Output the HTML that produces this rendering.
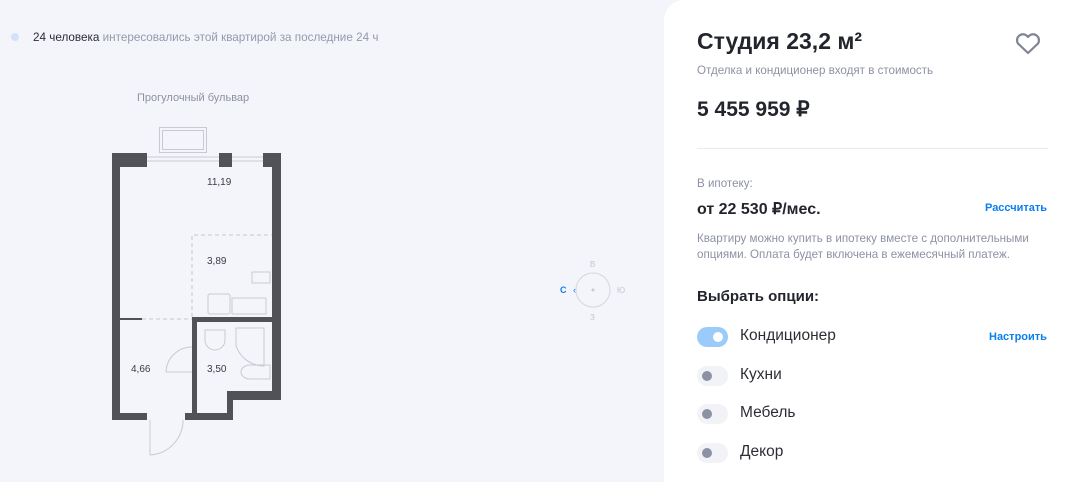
<!DOCTYPE html>
<html><head><meta charset="utf-8"><style>
*{margin:0;padding:0;box-sizing:border-box}
body{width:1080px;height:482px;background:#f3f5fa;font-family:"Liberation Sans",sans-serif;position:relative;overflow:hidden;color:#23252d}
.a{position:absolute;white-space:nowrap}
.card{position:absolute;left:664px;top:0;width:416px;height:482px;background:#fff;border-radius:20px 0 0 0}
.tg{position:absolute;left:697px;width:31px;height:20px;border-radius:10px;background:#f2f3f6}
.tg i{position:absolute;left:5px;top:5px;width:10px;height:10px;border-radius:50%;background:#8c91a4}
.lb{position:absolute;left:740px;font-size:15.5px;color:#2c2e36}
</style></head><body>
<div class="a" style="left:11px;top:33px;width:8px;height:8px;border-radius:50%;background:#d3e2fb"></div>
<div class="a" style="left:33px;top:31px;font-size:11.7px;color:#2b2d35">24 человека <span style="color:#9599ab">интересовались этой квартирой за последние 24 ч</span></div>
<div class="a" style="left:137px;top:92px;font-size:11px;color:#8d91a1">Прогулочный бульвар</div>
<svg class="a" style="left:0;top:0" width="660" height="482">
<g fill="none" stroke="#c8cad1" stroke-width="1">
<rect x="159.5" y="127.5" width="47" height="25"/><rect x="162.5" y="130.5" width="41" height="19"/>
<line x1="147" y1="157" x2="219" y2="157"/><line x1="147" y1="161" x2="219" y2="161"/><line x1="232" y1="157" x2="263" y2="157"/><line x1="232" y1="161" x2="263" y2="161"/>
<path d="M166 372 A26 26 0 0 1 192 347"/><line x1="166" y1="372" x2="192" y2="372"/>
<path d="M150 455 L150 420 M150 455 A35 35 0 0 0 183 420"/>
<rect x="208" y="294" width="22" height="20" rx="2"/><rect x="232" y="298" width="34" height="16"/>
<rect x="252" y="272" width="18" height="11"/>
<path d="M205 330 v10 a10 10 0 0 0 20 0 v-10 z"/><path d="M236 328 v18 a30 30 0 0 0 28 20 v-38 z"/>
<path d="M270 365 h-20 a9 7 0 0 0 0 14 h20z"/>
</g>
<g fill="none" stroke="#c4c6cc" stroke-width="1" stroke-dasharray="4 3">
<path d="M192 317 V235 H272"/><line x1="142" y1="319" x2="192" y2="319"/>
</g>
<g fill="#505257">
<rect x="112" y="153" width="35" height="14"/><rect x="219" y="153" width="13" height="14"/><rect x="263" y="153" width="18" height="14"/>
<rect x="112" y="153" width="8" height="267"/><rect x="272" y="153" width="9" height="244"/>
<rect x="112" y="413" width="35" height="7"/><rect x="185" y="413" width="48" height="7"/>
<rect x="227" y="391" width="54" height="9"/><rect x="227" y="391" width="6" height="29"/>
<rect x="192" y="317" width="5" height="96"/><rect x="192" y="317" width="80" height="5"/>
<rect x="120" y="318" width="22" height="2"/>
</g>
<g font-size="10" fill="#3a3c44" font-family="Liberation Sans">
<text x="207" y="185">11,19</text><text x="207" y="264">3,89</text><text x="131" y="372">4,66</text><text x="207" y="372">3,50</text>
</g>
<circle cx="593" cy="290" r="17" fill="none" stroke="#d9dbe2" stroke-width="1.2"/>
<circle cx="593" cy="290" r="1.5" fill="#c8cad1"/>
<g font-size="8" fill="#c3c6cf" font-family="Liberation Sans"><text x="590" y="267">В</text><text x="617" y="293">Ю</text><text x="590" y="320">З</text></g>
<text x="560" y="293" font-size="9" font-weight="bold" fill="#0a7ff0">С</text>
<text x="573" y="293" font-size="9" fill="#0a7ff0">‹</text>
</svg>
<div class="card"></div>
<div class="a" style="left:697px;top:28px;font-size:23px;font-weight:bold;color:#23252d">Студия 23,2 м²</div>
<svg class="a" style="left:1014px;top:32px" width="28" height="24" viewBox="0 0 28 24"><path d="M14 21 L4 11.5 A5.5 5.5 0 0 1 14 5 A5.5 5.5 0 0 1 24 11.5 Z" fill="none" stroke="#7f8496" stroke-width="2.2" stroke-linejoin="round"/></svg>
<div class="a" style="left:697px;top:64px;font-size:11.6px;color:#8d91a3">Отделка и кондиционер входят в стоимость</div>
<div class="a" style="left:697px;top:97px;font-size:21px;font-weight:bold">5 455 959 ₽</div>
<div class="a" style="left:697px;top:148px;width:351px;height:1px;background:#e6eaf2"></div>
<div class="a" style="left:697px;top:177px;font-size:11.6px;color:#8d91a3">В ипотеку:</div>
<div class="a" style="left:697px;top:199px;font-size:16px;font-weight:bold">от 22 530 ₽/мес.</div>
<div class="a" style="left:985px;top:202px;font-size:11px;font-weight:bold;color:#0a7ff0">Рассчитать</div>
<div class="a" style="left:697px;top:231px;font-size:11.6px;line-height:16px;color:#8d91a3">Квартиру можно купить в ипотеку вместе с дополнительными<br>опциями. Оплата будет включена в ежемесячный платеж.</div>
<div class="a" style="left:697px;top:288px;font-size:15px;font-weight:bold">Выбрать опции:</div>
<div class="tg" style="top:327px;background:#9bcbfb"><i style="left:16px;background:#fff"></i></div>
<div class="lb" style="top:327px">Кондиционер</div>
<div class="a" style="left:989px;top:331px;font-size:11px;font-weight:bold;color:#0a7ff0">Настроить</div>
<div class="tg" style="top:366px"><i></i></div><div class="lb" style="top:366px">Кухни</div>
<div class="tg" style="top:404px"><i></i></div><div class="lb" style="top:404px">Мебель</div>
<div class="tg" style="top:443px"><i></i></div><div class="lb" style="top:443px">Декор</div>
</body></html>
